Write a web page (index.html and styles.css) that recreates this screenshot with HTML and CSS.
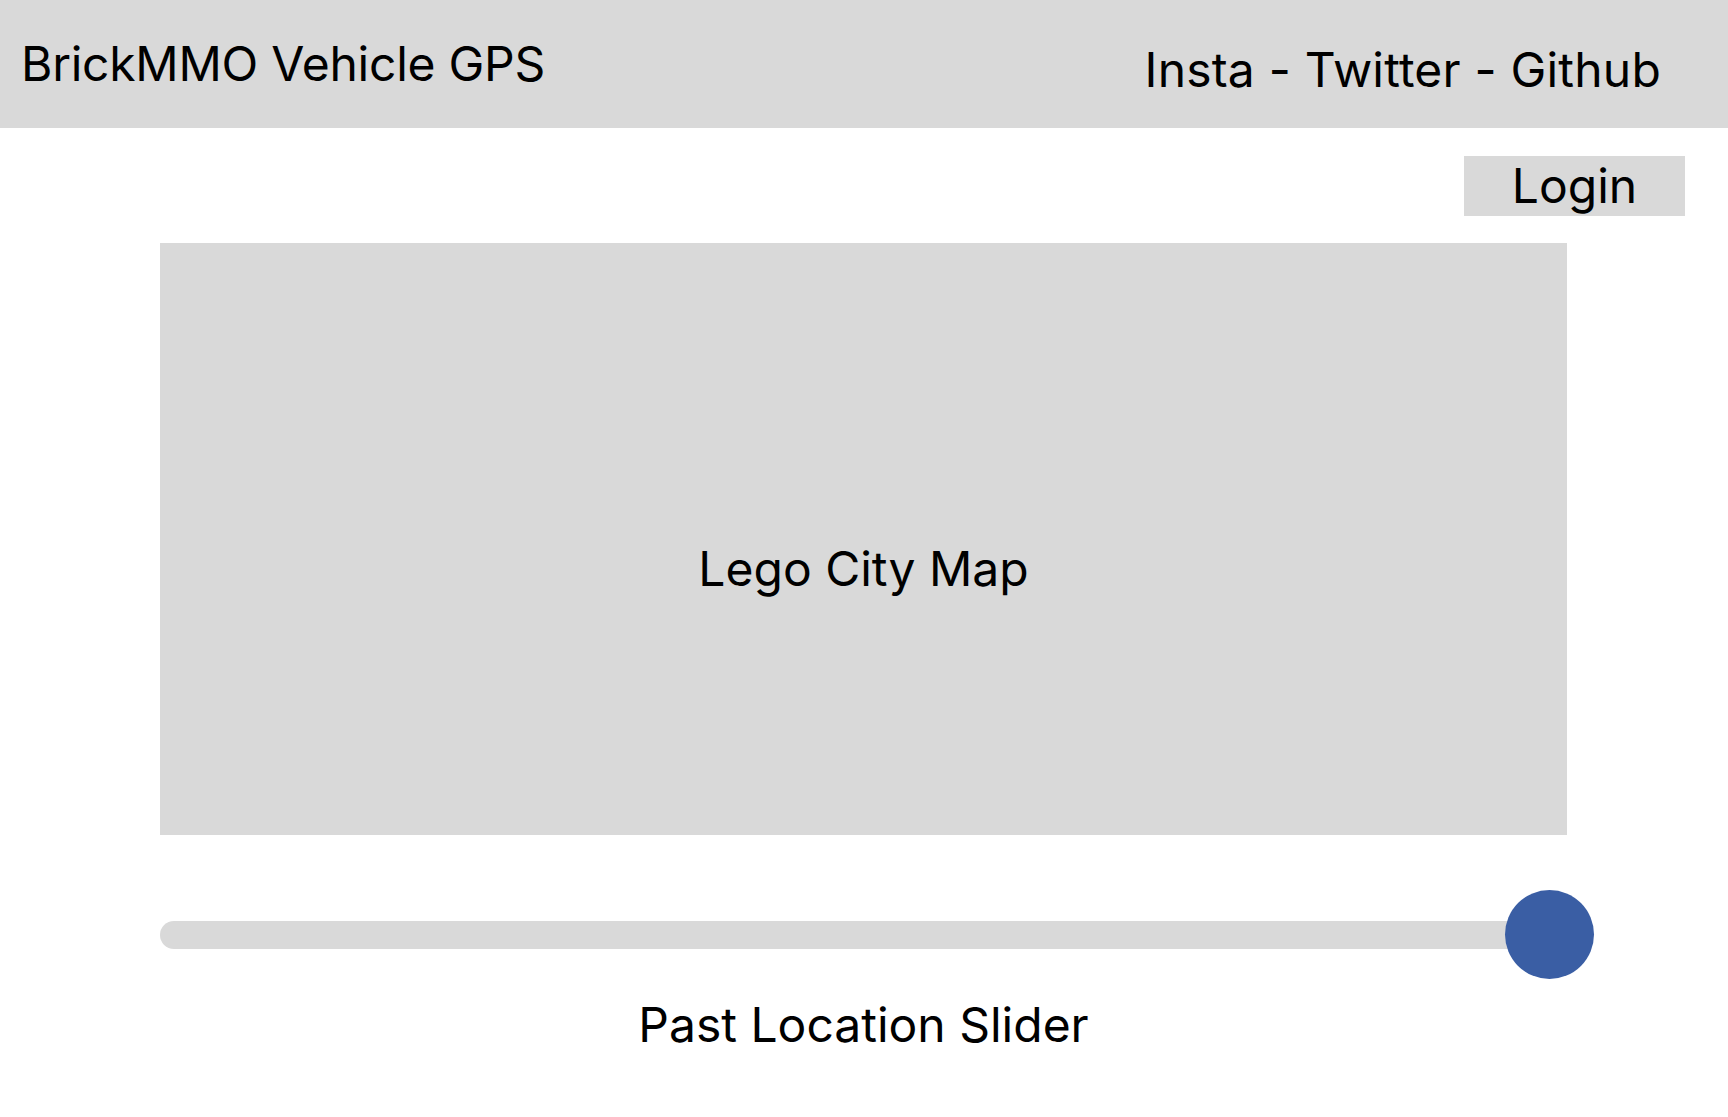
FILE: index.html
```html
<!DOCTYPE html>
<html lang="en">
<head>
<meta charset="utf-8">
<title>BrickMMO Vehicle GPS</title>
<link rel="stylesheet" href="styles.css">
</head>
<body>
<header class="topbar">
  <h1 class="brand">BrickMMO Vehicle GPS</h1>
  <nav class="social">Insta - Twitter - Github</nav>
</header>
<div class="login-row">
  <button class="login">Login</button>
</div>
<main class="content">
  <section class="map">Lego City Map</section>
  <div class="slider">
    <div class="track"></div>
    <div class="thumb"></div>
  </div>
  <p class="caption">Past Location Slider</p>
</main>
</body>
</html>
```

FILE: styles.css
```css
* { box-sizing: border-box; }
body {
  margin: 0;
  background: #ffffff;
  color: #000000;
  font-family: Inter, "Noto Sans", sans-serif;
  font-size: 48px;
}
.topbar {
  height: 128px;
  background: #d9d9d9;
  display: flex;
  justify-content: space-between;
  align-items: flex-start;
  padding: 0 67px 0 21px;
}
.brand {
  margin: 36px 0 0 0;
  font-size: 48px;
  font-weight: 400;
  line-height: 56px;
  letter-spacing: -0.25px;
}
.social {
  margin-top: 42px;
  line-height: 56px;
  letter-spacing: 0.2px;
}
.login-row {
  display: flex;
  justify-content: flex-end;
  padding: 28px 43px 0 0;
}
.login {
  width: 221px;
  height: 60px;
  border: 0;
  background: #d9d9d9;
  font-family: inherit;
  font-size: 48px;
  line-height: 56px;
  padding: 0;
  color: #000;
}
.content {
  padding: 27px 161px 0 160px;
  display: flex;
  flex-direction: column;
}
.map {
  height: 592px;
  background: #d9d9d9;
  display: flex;
  align-items: center;
  justify-content: center;
  padding-top: 60px;
  line-height: 56px;
}
.slider {
  position: relative;
  margin-top: 86px;
  height: 28px;
}
.track {
  height: 28px;
  border-radius: 14px;
  background: #d9d9d9;
}
.thumb {
  position: absolute;
  left: 1345px;
  top: -31px;
  width: 89px;
  height: 89px;
  border-radius: 50%;
  background: #3a5ea4;
}
.caption {
  margin: 48px 0 0 0;
  text-align: center;
  line-height: 56px;
}
```
